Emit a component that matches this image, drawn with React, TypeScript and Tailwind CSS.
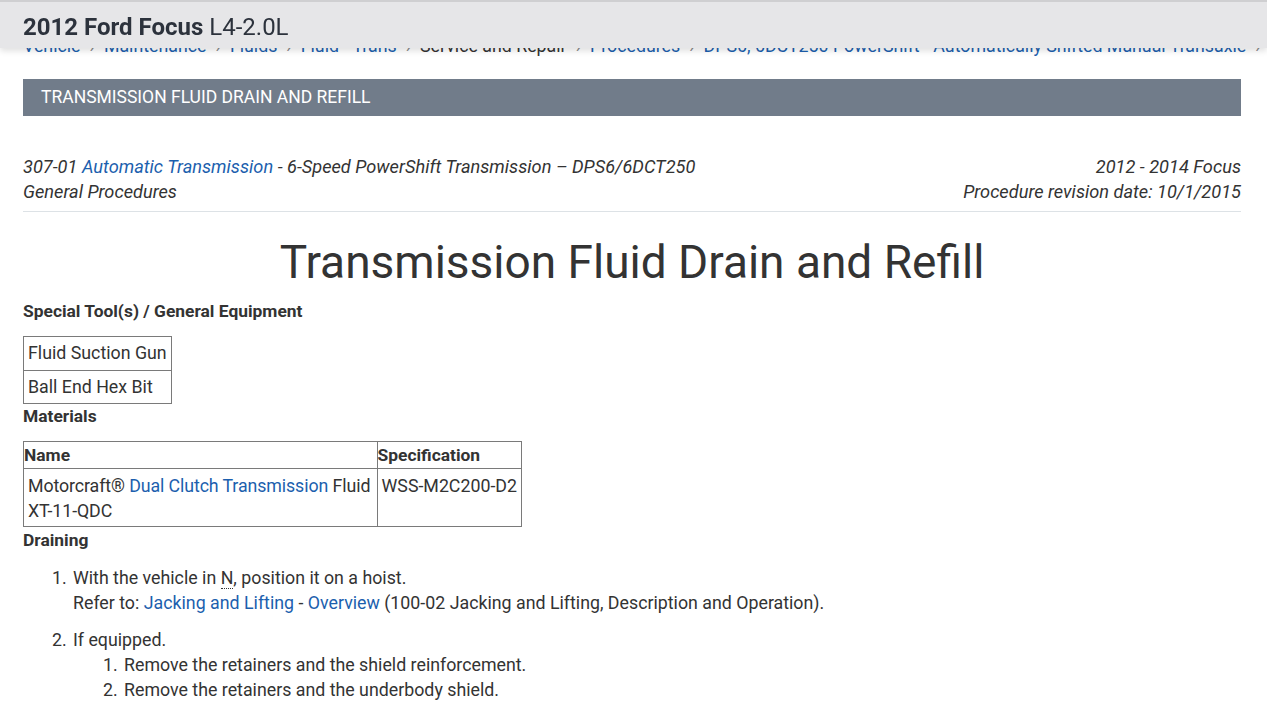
import React from "react";

const crumbs = [
  { label: "Vehicle", link: true },
  { label: "Maintenance", link: true },
  { label: "Fluids", link: true },
  { label: "Fluid - Trans", link: true },
  { label: "Service and Repair", link: false },
  { label: "Procedures", link: true },
  { label: "DPS6, 6DCT250 PowerShift - Automatically Shifted Manual Transaxle", link: true },
];

function Link({ children }: { children: React.ReactNode }) {
  return <a className="text-[#1c5fae]">{children}</a>;
}

export default function App() {
  return (
    <div className="min-h-[716px] bg-white text-[#333] font-['Roboto',sans-serif]">
      {/* Fixed vehicle header */}
      <header className="fixed top-0 left-0 right-0 z-10 h-[48px] bg-[#e6e6e8] border-t-2 border-[#cfcfd1] shadow-[0_3px_6px_rgba(0,0,0,0.12)] flex items-center px-[23px] pt-[4px]">
        <h2 className="text-[24px] text-[#2c323c]">
          <span className="font-bold">2012 Ford Focus</span>{" "}
          <span>L4-2.0L</span>
        </h2>
      </header>

      <main className="px-[23px] pt-[34px] pr-[26px]">
        {/* Breadcrumb (mostly hidden under header) */}
        <nav className="flex items-center gap-[9px] text-[17.8px] leading-[24px] whitespace-nowrap">
          {crumbs.map((c) => (
            <React.Fragment key={c.label}>
              <span className={c.link ? "text-[#1c5fae]" : "text-[#333]"}>{c.label}</span>
              <span className="text-[#888]">›</span>
            </React.Fragment>
          ))}
        </nav>

        {/* Section banner */}
        <div className="mt-[21px] h-[37px] bg-[#717c8a] flex items-center px-[18px]">
          <span className="text-white text-[17.5px] uppercase">
            Transmission Fluid Drain and Refill
          </span>
        </div>

        {/* Meta */}
        <div className="mt-[38px] flex justify-between italic text-[18.2px] leading-[25px] pb-[7px] border-b border-[#dde2e6]">
          <div>
            <div>
              307-01 <Link>Automatic Transmission</Link> - 6-Speed PowerShift Transmission – DPS6/6DCT250
            </div>
            <div>General Procedures</div>
          </div>
          <div className="text-right">
            <div>2012 - 2014 Focus</div>
            <div>Procedure revision date: 10/1/2015</div>
          </div>
        </div>

        <h1 className="mt-[22px] text-center text-[46px] leading-[56px] text-[#333]">
          Transmission Fluid Drain and Refill
        </h1>

        <div className="text-[17.8px]">
          <h3 className="font-bold text-[17.4px] mt-[9px] leading-[24px]">Special Tool(s) / General Equipment</h3>
          <table className="mt-[13px] border-collapse border border-[#7a7a7a]">
            <tbody>
              <tr>
                <td className="border border-[#7a7a7a] px-[4px] h-[34px] whitespace-nowrap">Fluid Suction Gun</td>
              </tr>
              <tr>
                <td className="border border-[#7a7a7a] px-[4px] h-[33px] whitespace-nowrap">Ball End Hex Bit</td>
              </tr>
            </tbody>
          </table>

          <h3 className="font-bold text-[17.4px] leading-[24px]">Materials</h3>
          <table className="mt-[13px] border-collapse border border-[#7a7a7a] w-[499px]">
            <thead>
              <tr className="text-left">
                <th className="border border-[#7a7a7a] px-0 h-[26px] font-bold text-[17.4px] w-[355px]">Name</th>
                <th className="border border-[#7a7a7a] px-0 font-bold text-[17.4px]">Specification</th>
              </tr>
            </thead>
            <tbody>
              <tr className="align-top">
                <td className="border border-[#7a7a7a] px-[4px] pt-[4px] pb-[3px] leading-[25px] whitespace-nowrap tracking-[-0.1px]">
                  Motorcraft® <Link>Dual Clutch Transmission</Link> Fluid
                  <br />
                  XT-11-QDC
                </td>
                <td className="border border-[#7a7a7a] px-[4px] pt-[4px] leading-[25px] whitespace-nowrap">WSS-M2C200-D2</td>
              </tr>
            </tbody>
          </table>

          <h3 className="font-bold text-[17.4px] leading-[24px] mt-[1px]">Draining</h3>
          <ol className="mt-[13px] ml-[48px] list-decimal leading-[25px]">
            <li className="pl-[2px]">
              With the vehicle in{" "}
              <abbr className="no-underline border-b border-dotted border-[#333]">N</abbr>, position it on a hoist.
              <div>
                Refer to: <Link>Jacking and Lifting</Link> - <Link>Overview</Link> (100-02 Jacking and Lifting, Description and Operation).
              </div>
            </li>
            <li className="pl-[2px] mt-[12px]">
              If equipped.
              <ol className="ml-[49px] list-decimal">
                <li className="pl-[2px]">Remove the retainers and the shield reinforcement.</li>
                <li className="pl-[2px]">Remove the retainers and the underbody shield.</li>
              </ol>
            </li>
          </ol>
        </div>
      </main>
    </div>
  );
}
